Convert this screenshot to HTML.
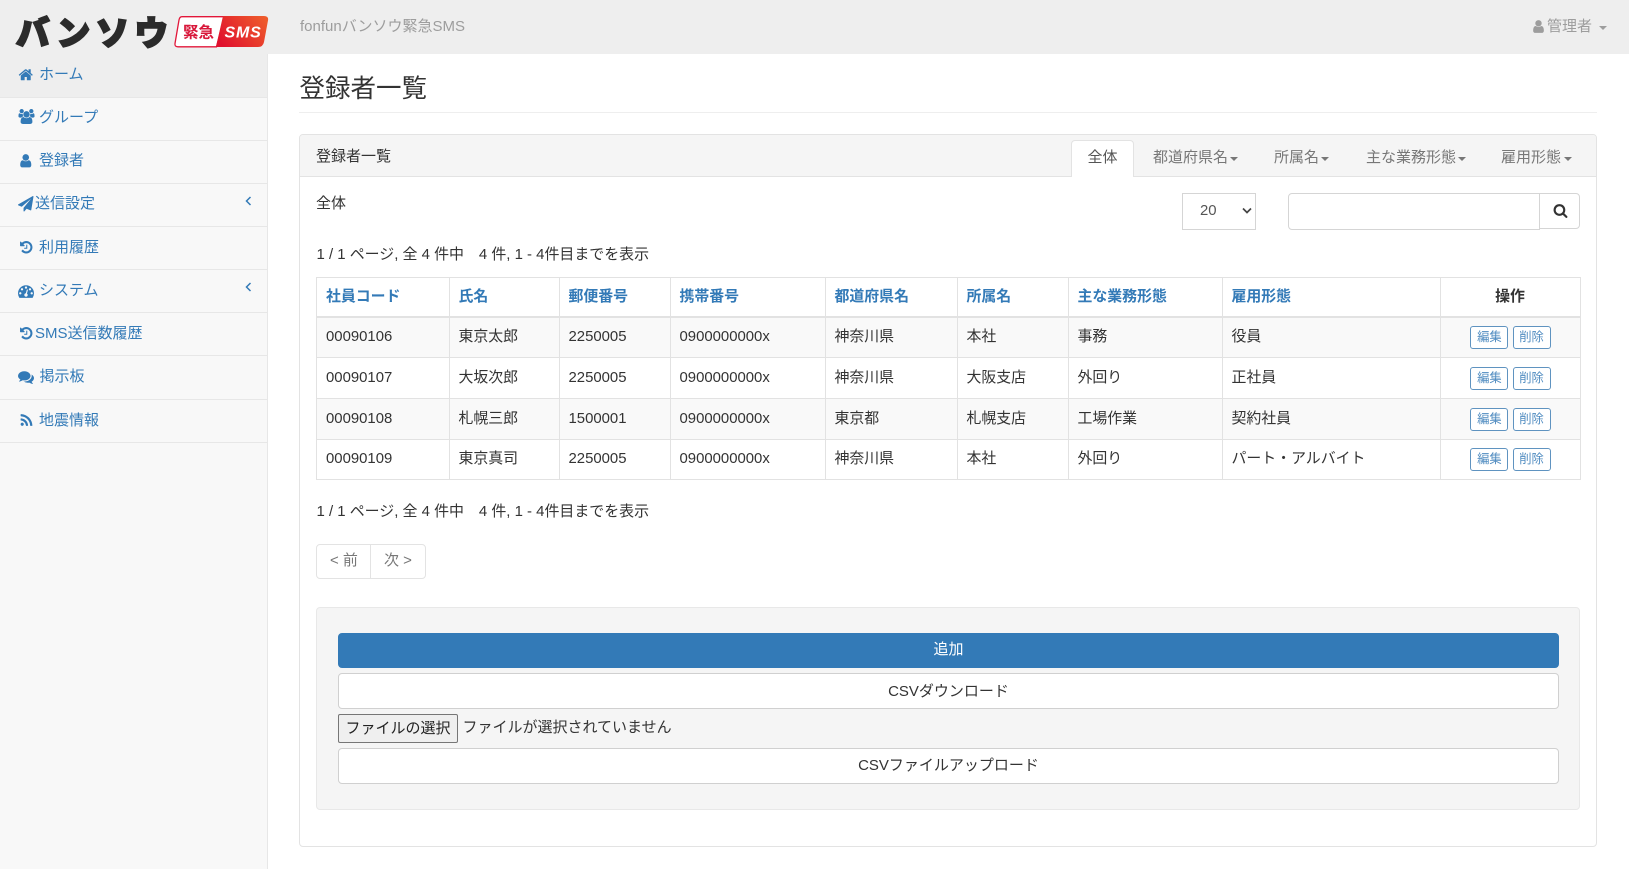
<!DOCTYPE html>
<html lang="ja"><head><meta charset="utf-8"><title>登録者一覧</title>
<style>
*{box-sizing:border-box}
html,body{margin:0;padding:0;width:1629px;height:869px;overflow:hidden;background:#fff}
body{font-family:"Liberation Sans","Noto Sans CJK JP",sans-serif;font-size:15px;color:#333;position:relative}
.a{position:absolute}
.t{position:absolute;white-space:nowrap;line-height:20px;height:20px}
.top{left:0;top:0;width:1629px;height:54px;background:#eee}
.side{left:0;top:54px;width:268px;height:815px;background:#f8f8f8;border-right:1px solid #e7e7e7}
.ln{position:absolute;left:0;width:267px;height:1px;background:#e7e7e7}
.l{color:#337ab7}
.ic{position:absolute;fill:#337ab7}
.car{position:absolute;width:0;height:0;border-left:4px solid transparent;border-right:4px solid transparent;border-top:4px solid #777}
.tab{color:#777}
table{position:absolute;left:316px;top:277px;width:1263.5px;border-collapse:collapse;table-layout:fixed;font-size:14.9px}
td,th{border:1px solid #e2e2e2;padding:0 8px 1px 9px;text-align:left;vertical-align:middle;white-space:nowrap;line-height:20px}
th{border-bottom:2px solid #e2e2e2;color:#337ab7;font-weight:700;padding:1px 8px 0 9px}
tr.s td{background:#f9f9f9}
.b{display:inline-block;width:38px;height:23px;line-height:20px;border:1px solid #5f93c0;border-radius:3px;background:#fff;color:#4f8bc0;font-size:12.3px;text-align:center;vertical-align:top}
td.c{text-align:center;padding:0 0 0 1px}
.btn{position:absolute;left:338px;width:1221px;height:35.5px;border:1px solid #d0d0d0;border-radius:4px;background:#fff;text-align:center;line-height:34px;color:#333}
</style></head><body>
<div class="a top"></div>
<svg class="a" style="left:10px;top:8px" width="262" height="46" viewBox="0 0 262 46">
<text x="6" y="37" font-family="Noto Sans CJK JP" font-weight="900" font-size="33.5" letter-spacing="5.5" fill="#2b2b2b" stroke="#2b2b2b" stroke-width="2">バンソウ</text>
<path d="M172 8.7H214L206.500 38.800H168Q164.500 38.800 165 35.500L169 12Q169.600 8.700 172 8.700Z" fill="#fff" stroke="#e2173a" stroke-width="1.300"/>
<path d="M213 8H254Q258.800 8 258 12.500L254 34Q253 39 248 39H206Z" fill="url(#g)"/>
<defs><linearGradient id="g" x1="0" x2="1" y1=".7" y2=".2"><stop offset="0" stop-color="#e0102d"/><stop offset="1" stop-color="#ee5b2c"/></linearGradient></defs>
<text x="173" y="29.500" font-family="Noto Sans CJK JP" font-weight="700" font-size="15.500" fill="#d8173a">緊急</text>
<text x="214.500" y="29.500" font-family="Liberation Sans" font-weight="700" font-style="italic" font-size="16" fill="#fff" letter-spacing=".8">SMS</text>
</svg>
<div class="t" style="left:300px;top:17px;color:#9d9d9d">fonfunバンソウ緊急SMS</div>
<svg class="ic" style="left:1531px;top:19px;fill:#9d9d9d" width="15" height="15" viewBox="0 0 1792 1792"><path d="M1536 1399q0 109-62.500 187t-150.500 78h-854q-88 0-150.500-78t-62.500-187q0-85 8.500-160.500t31.500-152 58.500-131 94-89 134.500-34.500q131 128 313 128t313-128q76 0 134.500 34.500t94 89 58.500 131 31.500 152 8.500 160.500zm-256-887q0 159-112.500 271.500t-271.500 112.500-271.500-112.500-112.500-271.500 112.500-271.500 271.500-112.500 271.500 112.500 112.500 271.500z"/></svg>
<div class="t" style="left:1547px;top:17px;color:#9d9d9d">管理者</div>
<div class="car" style="left:1599px;top:26px;border-top-color:#9d9d9d"></div>

<div class="a side"></div>
<div class="a" style="left:0;top:54px;width:267px;height:43px;background:#eee"></div>
<div class="ln" style="top:97px"></div><div class="ln" style="top:140px"></div><div class="ln" style="top:183px"></div><div class="ln" style="top:226px"></div><div class="ln" style="top:269px"></div><div class="ln" style="top:312px"></div><div class="ln" style="top:355px"></div><div class="ln" style="top:399px"></div><div class="ln" style="top:442px"></div>

<svg class="ic" style="left:18px;top:66.5px" width="15.5" height="15.5" viewBox="0 0 1792 1792"><path d="M1472 992v480q0 26-19 45t-45 19h-384v-384h-256v384h-384q-26 0-45-19t-19-45v-480q0-1 .5-3t.5-3l575-474 575 474q1 2 1 6zm223-69l-62 74q-8 9-21 11h-3q-13 0-21-7l-692-577-692 577q-12 8-24 7-13-2-21-11l-62-74q-8-10-7-23.500t11-21.500l719-599q32-26 76-26t76 26l244 204v-195q0-14 9-23t23-9h192q14 0 23 9t9 23v408l219 182q10 8 11 21.500t-7 23.500z"/></svg>
<div class="t l" style="left:39px;top:65px">ホーム</div>
<svg class="ic" style="left:17.500px;top:109px" width="17" height="15" viewBox="0 0 1920 1792"><path d="M593 896q-162 5-265 128h-134q-82 0-138-40.500t-56-118.500q0-353 124-353 6 0 43.500 21t97.500 42.500 119 21.500q67 0 133-23-5 37-5 66 0 139 81 256zm1071 637q0 120-73 189.500t-194 69.500h-874q-121 0-194-69.500t-73-189.500q0-53 3.500-103.500t14-109 26.500-108.500 43-97.500 62-81 85.500-53.500 111.500-20q10 0 43 21.500t73 48 107 48 135 21.500 135-21.500 107-48 73-48 43-21.500q61 0 111.500 20t85.500 53.500 62 81 43 97.500 26.500 108.500 14 109 3.500 103.500zm-1024-1277q0 106-75 181t-181 75-181-75-75-181 75-181 181-75 181 75 75 181zm704 384q0 159-112.500 271.500t-271.500 112.500-271.500-112.500-112.500-271.500 112.500-271.500 271.500-112.500 271.500 112.500 112.500 271.500zm576 225q0 78-56 118.500t-138 40.500h-134q-103-123-265-128 81-117 81-256 0-29-5-66 66 23 133 23 59 0 119-21.500t97.500-42.500 43.500-21q124 0 124 353zm-128-609q0 106-75 181t-181 75-181-75-75-181 75-181 181-75 181 75 75 181z"/></svg>
<div class="t l" style="left:39px;top:107.500px">グループ</div>
<svg class="ic" style="left:18px;top:152.5px" width="15.5" height="15.5" viewBox="0 0 1792 1792"><path d="M1536 1399q0 109-62.500 187t-150.500 78h-854q-88 0-150.500-78t-62.500-187q0-85 8.500-160.500t31.500-152 58.500-131 94-89 134.500-34.500q131 128 313 128t313-128q76 0 134.500 34.500t94 89 58.500 131 31.500 152 8.500 160.500zm-256-887q0 159-112.500 271.500t-271.500 112.500-271.500-112.500-112.500-271.500 112.500-271.500 271.500-112.500 271.500 112.500 112.500 271.500z"/></svg>
<div class="t l" style="left:39px;top:151px">登録者</div>
<svg class="ic" style="left:18px;top:196px" width="15.500" height="15.500" viewBox="0 0 1792 1792"><path d="M1764 11q33 24 27 64l-256 1536q-5 29-32 45-14 8-31 8-11 0-24-5l-453-185-242 295q-18 23-49 23-13 0-22-4-19-7-30.500-23.500t-11.500-36.500v-349l864-1059-1069 925-395-162q-37-14-40-55-2-40 32-59l1664-960q15-9 32-9 20 0 36 11z"/></svg>
<div class="t l" style="left:35px;top:193.500px">送信設定</div>
<svg class="a" style="left:244px;top:195px" width="9" height="12" viewBox="0 0 9 12"><path d="M6.500 2L2.500 6l4 4" fill="none" stroke="#337ab7" stroke-width="1.500"/></svg>
<svg class="ic" style="left:18.500px;top:240px" width="14.5" height="14.5" viewBox="0 0 1792 1792"><path d="M1664 896q0 156-61 298t-164 245-245 164-298 61q-172 0-327-72.500t-264-204.500q-7-10-6.500-22.500t8.500-20.500l137-138q10-9 25-9 16 2 23 12 73 95 179 147t225 52q104 0 198.500-40.500t163.500-109.500 109.500-163.500 40.500-198.500-40.500-198.500-109.500-163.500-163.500-109.500-198.500-40.500q-98 0-188 35.500t-160 101.500l137 138q31 30 14 69-17 40-59 40h-448q-26 0-45-19t-19-45v-448q0-42 40-59 39-17 69 14l130 129q107-101 244.500-156.500t284.500-55.500q156 0 298 61t245 164 164 245 61 298zm-640-288v448q0 14-9 23t-23 9h-320q-14 0-23-9t-9-23v-64q0-14 9-23t23-9h224v-352q0-14 9-23t23-9h64q14 0 23 9t9 23z"/></svg>
<div class="t l" style="left:39px;top:238px">利用履歴</div>
<svg class="ic" style="left:18px;top:282.5px" width="16" height="16" viewBox="0 0 1792 1792"><path d="M384 1152q0-53-37.500-90.500t-90.500-37.500-90.500 37.500-37.500 90.500 37.500 90.500 90.500 37.500 90.500-37.500 37.500-90.500zm192-448q0-53-37.500-90.500t-90.500-37.500-90.500 37.500-37.500 90.500 37.500 90.500 90.500 37.500 90.500-37.500 37.500-90.500zm428 481l101-382q6-26-7.500-48.500t-38.500-29.500-48 6.500-30 39.500l-101 382q-60 5-107 43.500t-63 98.500q-20 77 20 146t117 89 146-20 89-117q16-60-6-117t-72-91zm660-33q0-53-37.500-90.500t-90.500-37.500-90.500 37.500-37.500 90.500 37.500 90.500 90.500 37.500 90.500-37.500 37.500-90.500zm-640-640q0-53-37.500-90.500t-90.500-37.500-90.500 37.500-37.500 90.500 37.500 90.500 90.500 37.500 90.500-37.500 37.500-90.500zm448 192q0-53-37.500-90.500t-90.500-37.500-90.500 37.500-37.500 90.500 37.500 90.500 90.500 37.500 90.500-37.500 37.500-90.500zm320 448q0 261-141 483-19 29-54 29h-1402q-35 0-54-29-141-221-141-483 0-182 71-348t191-286 286-191 348-71 348 71 286 191 191 286 71 348z"/></svg>
<div class="t l" style="left:39px;top:280.5px">システム</div>
<svg class="a" style="left:244px;top:281px" width="9" height="12" viewBox="0 0 9 12"><path d="M6.500 2L2.500 6l4 4" fill="none" stroke="#337ab7" stroke-width="1.500"/></svg>
<svg class="ic" style="left:18.500px;top:326px" width="14.5" height="14.5" viewBox="0 0 1792 1792"><path d="M1664 896q0 156-61 298t-164 245-245 164-298 61q-172 0-327-72.500t-264-204.500q-7-10-6.500-22.500t8.500-20.500l137-138q10-9 25-9 16 2 23 12 73 95 179 147t225 52q104 0 198.500-40.500t163.500-109.500 109.500-163.500 40.500-198.500-40.500-198.500-109.500-163.500-163.500-109.500-198.500-40.500q-98 0-188 35.500t-160 101.500l137 138q31 30 14 69-17 40-59 40h-448q-26 0-45-19t-19-45v-448q0-42 40-59 39-17 69 14l130 129q107-101 244.500-156.500t284.500-55.500q156 0 298 61t245 164 164 245 61 298zm-640-288v448q0 14-9 23t-23 9h-320q-14 0-23-9t-9-23v-64q0-14 9-23t23-9h224v-352q0-14 9-23t23-9h64q14 0 23 9t9 23z"/></svg>
<div class="t l" style="left:35px;top:324px">SMS送信数履歴</div>
<svg class="ic" style="left:18px;top:368.500px" width="16" height="16" viewBox="0 0 1792 1792"><path d="M1408 768q0 139-94 257t-256.500 186.500-353.500 68.500q-86 0-176-16-124 88-278 128-36 9-86 16h-3q-11 0-20.500-8t-11.500-21q-1-3-1-6.500t.5-6.500 2-6l2.500-5 3.500-5.500 4-5 4.500-5 4-4.500q5-6 23-25t26-29.500 22.500-29 25-38.500 20.500-44q-124-72-195-177t-71-224q0-139 94-257t256.500-186.500 353.500-68.500 353.500 68.500 256.500 186.500 94 257zm384 256q0 120-71 224.500t-195 176.500q10 24 20.500 44t25 38.500 22.500 29 26 29.500 23 25q1 1 4 4.500t4.500 5 4 5 3.500 5.500l2.500 5 2 6 .5 6.500-1 6.500q-3 14-13 22t-22 7q-50-7-86-16-154-40-278-128-90 16-176 16-271 0-472-132 58 4 88 4 161 0 309-45t264-129q125-92 192-212t67-254q0-77-23-152 129 71 204 178t75 230z"/></svg>
<div class="t l" style="left:39.500px;top:367px">掲示板</div>
<svg class="ic" style="left:18.500px;top:412.5px" width="15" height="15" viewBox="0 0 1792 1792"><path d="M576 1344q0 80-56 136t-136 56-136-56-56-136 56-136 136-56 136 56 56 136zm512 123q2 28-17 48-18 21-47 21h-135q-25 0-43-16.500t-20-41.500q-22-229-184.500-391.500t-391.500-184.500q-25-2-41.500-20t-16.500-43v-135q0-29 21-47 17-17 43-17h5q160 13 306 80.500t259 181.500q114 113 181.500 259t80.500 306zm512 2q2 27-18 47-18 20-46 20h-143q-26 0-44.500-17.500t-19.500-42.500q-12-215-101-408.500t-231.500-336-336-231.500-408.500-102q-25-1-42.500-19.500t-17.500-43.500v-143q0-28 20-46 18-18 44-18h3q262 13 501.500 120t425.500 294q187 186 294 425.500t120 501.500z"/></svg>
<div class="t l" style="left:39px;top:410.500px">地震情報</div>

<div class="t" style="left:299.500px;top:79px;font-size:25.500px;line-height:20px">登録者一覧</div>
<div class="a" style="left:299px;top:111.500px;width:1298px;height:1px;background:#eee"></div>

<div class="a" style="left:299px;top:134px;width:1298px;height:713px;border:1px solid #e3e3e3;border-radius:4px;background:#fff"></div>
<div class="a" style="left:300px;top:135px;width:1296px;height:41.500px;background:#f5f5f5;border-bottom:1px solid #e3e3e3;border-radius:3px 3px 0 0"></div>
<div class="t" style="left:316px;top:146.5px">登録者一覧</div>
<div class="a" style="left:1071px;top:139.500px;width:63px;height:37.500px;background:#fff;border:1px solid #e3e3e3;border-bottom:0;border-radius:4px 4px 0 0"></div>
<div class="t" style="left:1087.500px;top:147.500px;color:#555">全体</div>
<div class="t tab" style="left:1153px;top:147.500px">都道府県名</div><div class="car" style="left:1230px;top:157px"></div>
<div class="t tab" style="left:1274px;top:147.500px">所属名</div><div class="car" style="left:1321px;top:157px"></div>
<div class="t tab" style="left:1366px;top:147.500px">主な業務形態</div><div class="car" style="left:1458px;top:157px"></div>
<div class="t tab" style="left:1501px;top:147.500px">雇用形態</div><div class="car" style="left:1564px;top:157px"></div>

<div class="t" style="left:316px;top:193.500px">全体</div>
<div class="a" style="left:1182px;top:193px;width:74px;height:36.500px;border:1px solid #d5d5d5;background:#fff"></div>
<div class="t" style="left:1200px;top:201px;font-size:14.900px;color:#555">20</div>
<svg class="a" style="left:1242px;top:207px" width="10" height="8" viewBox="0 0 10 8"><path d="M1 1.500l4 4 4-4" fill="none" stroke="#444" stroke-width="1.700"/></svg>
<div class="a" style="left:1288px;top:193px;width:252px;height:36.500px;border:1px solid #d5d5d5;border-radius:4px 0 0 4px;background:#fff"></div>
<div class="a" style="left:1539px;top:193px;width:41px;height:36px;border:1px solid #d5d5d5;border-radius:0 4px 4px 0;background:#fff"></div>
<svg class="ic" style="left:1552.500px;top:203px;fill:#333" width="15" height="15" viewBox="0 0 1792 1792"><path d="M1216 832q0-185-131.500-316.500t-316.500-131.500-316.500 131.500-131.500 316.500 131.500 316.500 316.500 131.500 316.500-131.500 131.500-316.500zm512 832q0 52-38 90t-90 38q-54 0-90-38l-343-342q-179 124-399 124-143 0-273.500-55.500t-225-150-150-225-55.500-273.500 55.500-273.500 150-225 225-150 273.500-55.500 273.500 55.500 225 150 150 225 55.500 273.500q0 220-124 399l343 343q37 37 37 90z"/></svg>

<div class="t" style="left:316.500px;top:245px;font-size:14.950px">1 / 1 ページ, 全 4 件中　4 件, 1 - 4件目までを表示</div>

<table>
<colgroup><col style="width:132.500px"><col style="width:110px"><col style="width:111px"><col style="width:155px"><col style="width:132px"><col style="width:111px"><col style="width:154px"><col style="width:218px"><col style="width:140px"></colgroup>
<tr style="height:39px"><th>社員コード</th><th>氏名</th><th>郵便番号</th><th>携帯番号</th><th>都道府県名</th><th>所属名</th><th>主な業務形態</th><th>雇用形態</th><th style="color:#333;text-align:center;padding-left:0;padding-right:0">操作</th></tr>
<tr class="s" style="height:41px"><td>00090106</td><td>東京太郎</td><td>2250005</td><td>0900000000x</td><td>神奈川県</td><td>本社</td><td>事務</td><td>役員</td><td class="c"><span class="b">編集</span> <span class="b" style="margin-left:0">削除</span></td></tr>
<tr style="height:41px"><td>00090107</td><td>大坂次郎</td><td>2250005</td><td>0900000000x</td><td>神奈川県</td><td>大阪支店</td><td>外回り</td><td>正社員</td><td class="c"><span class="b">編集</span> <span class="b" style="margin-left:0">削除</span></td></tr>
<tr class="s" style="height:41px"><td>00090108</td><td>札幌三郎</td><td>1500001</td><td>0900000000x</td><td>東京都</td><td>札幌支店</td><td>工場作業</td><td>契約社員</td><td class="c"><span class="b">編集</span> <span class="b" style="margin-left:0">削除</span></td></tr>
<tr style="height:40px"><td>00090109</td><td>東京真司</td><td>2250005</td><td>0900000000x</td><td>神奈川県</td><td>本社</td><td>外回り</td><td>パート・アルバイト</td><td class="c"><span class="b">編集</span> <span class="b" style="margin-left:0">削除</span></td></tr>
</table>

<div class="t" style="left:316.500px;top:502px;font-size:14.950px">1 / 1 ページ, 全 4 件中　4 件, 1 - 4件目までを表示</div>

<div class="a" style="left:316px;top:544px;width:109.500px;height:35px;border:1px solid #e3e3e3;border-radius:4px;background:#fff"></div>
<div class="a" style="left:370px;top:544px;width:1px;height:35px;background:#e3e3e3"></div>
<div class="t" style="left:330px;top:551px;color:#777">&lt; 前</div>
<div class="t" style="left:384px;top:551px;color:#777">次 &gt;</div>

<div class="a" style="left:316px;top:607px;width:1264px;height:202.500px;background:#f5f5f5;border:1px solid #e8e8e8;border-radius:4px"></div>
<div class="btn" style="top:632.500px;background:#337ab7;border-color:#337ab7;color:#fff;line-height:31px">追加</div>
<div class="btn" style="top:673px;line-height:35px">CSVダウンロード</div>
<div class="a" style="left:338px;top:714px;width:120px;height:29px;background:#efefef;border:1px solid #767676;border-radius:2px;text-align:center;line-height:27px;color:#222">ファイルの選択</div>
<div class="t" style="left:462.5px;top:718px;color:#333">ファイルが選択されていません</div>
<div class="btn" style="top:748px">CSVファイルアップロード</div>
</body></html>
